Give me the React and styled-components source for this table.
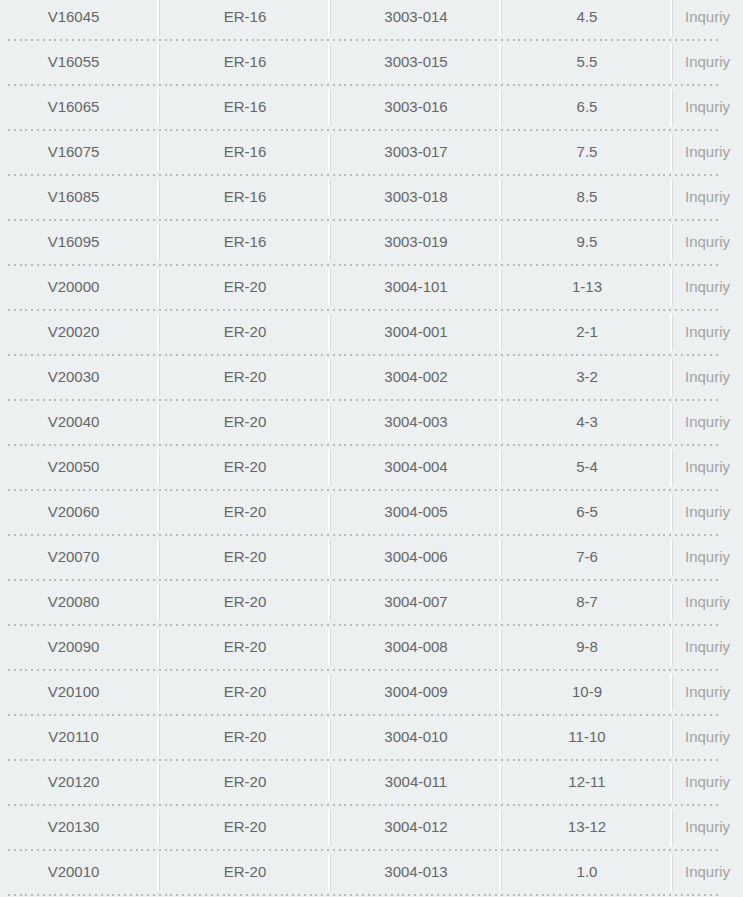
import React from "react";
import styled, { createGlobalStyle } from "styled-components";

const rows = [
  ["V16045", "ER-16", "3003-014", "4.5"],
  ["V16055", "ER-16", "3003-015", "5.5"],
  ["V16065", "ER-16", "3003-016", "6.5"],
  ["V16075", "ER-16", "3003-017", "7.5"],
  ["V16085", "ER-16", "3003-018", "8.5"],
  ["V16095", "ER-16", "3003-019", "9.5"],
  ["V20000", "ER-20", "3004-101", "1-13"],
  ["V20020", "ER-20", "3004-001", "2-1"],
  ["V20030", "ER-20", "3004-002", "3-2"],
  ["V20040", "ER-20", "3004-003", "4-3"],
  ["V20050", "ER-20", "3004-004", "5-4"],
  ["V20060", "ER-20", "3004-005", "6-5"],
  ["V20070", "ER-20", "3004-006", "7-6"],
  ["V20080", "ER-20", "3004-007", "8-7"],
  ["V20090", "ER-20", "3004-008", "9-8"],
  ["V20100", "ER-20", "3004-009", "10-9"],
  ["V20110", "ER-20", "3004-010", "11-10"],
  ["V20120", "ER-20", "3004-011", "12-11"],
  ["V20130", "ER-20", "3004-012", "13-12"],
  ["V20010", "ER-20", "3004-013", "1.0"],
];

const GlobalStyle = createGlobalStyle`
  html, body {
    margin: 0;
    padding: 0;
    background: #ecf0f1;
    overflow: hidden;
  }
  body {
    font-family: "Liberation Sans", Arial, sans-serif;
  }
`;

const Table = styled.div`
  width: 743px;
  margin-top: -4px;
`;

const Row = styled.div`
  display: grid;
  grid-template-columns: 157px 171px 171px 171px 73px;
  height: 45px;
  background-image: repeating-linear-gradient(
    to right,
    #b8bcbe 0 2px,
    transparent 2px 5.8px
  );
  background-repeat: no-repeat;
  background-size: 713px 2px;
  background-position: 8px 43px;
`;

const Cell = styled.div`
  display: flex;
  align-items: center;
  justify-content: ${(p) => (p.$left ? "flex-start" : "center")};
  box-sizing: border-box;
  height: 37px;
  margin-top: 3px;
  padding: ${(p) =>
    p.$first ? "0 10px 3px 0" : p.$left ? "0 0 3px 13px" : "0 0 3px 3px"};
  border-left: ${(p) => (p.$first ? "none" : "2px solid #ffffff")};
  box-shadow: ${(p) => (p.$first ? "none" : "inset 1px 0 0 #dadddf")};
  font-size: 15px;
  color: ${(p) => (p.$muted ? "#a3a3a3" : "#666666")};
  white-space: nowrap;
  overflow: hidden;
`;

export default function App() {
  return (
    <>
      <GlobalStyle />
      <Table>
        {rows.map((r, i) => (
          <Row key={i}>
            <Cell $first>{r[0]}</Cell>
            <Cell>{r[1]}</Cell>
            <Cell>{r[2]}</Cell>
            <Cell>{r[3]}</Cell>
            <Cell $left $muted>
              Inquriy
            </Cell>
          </Row>
        ))}
      </Table>
    </>
  );
}
